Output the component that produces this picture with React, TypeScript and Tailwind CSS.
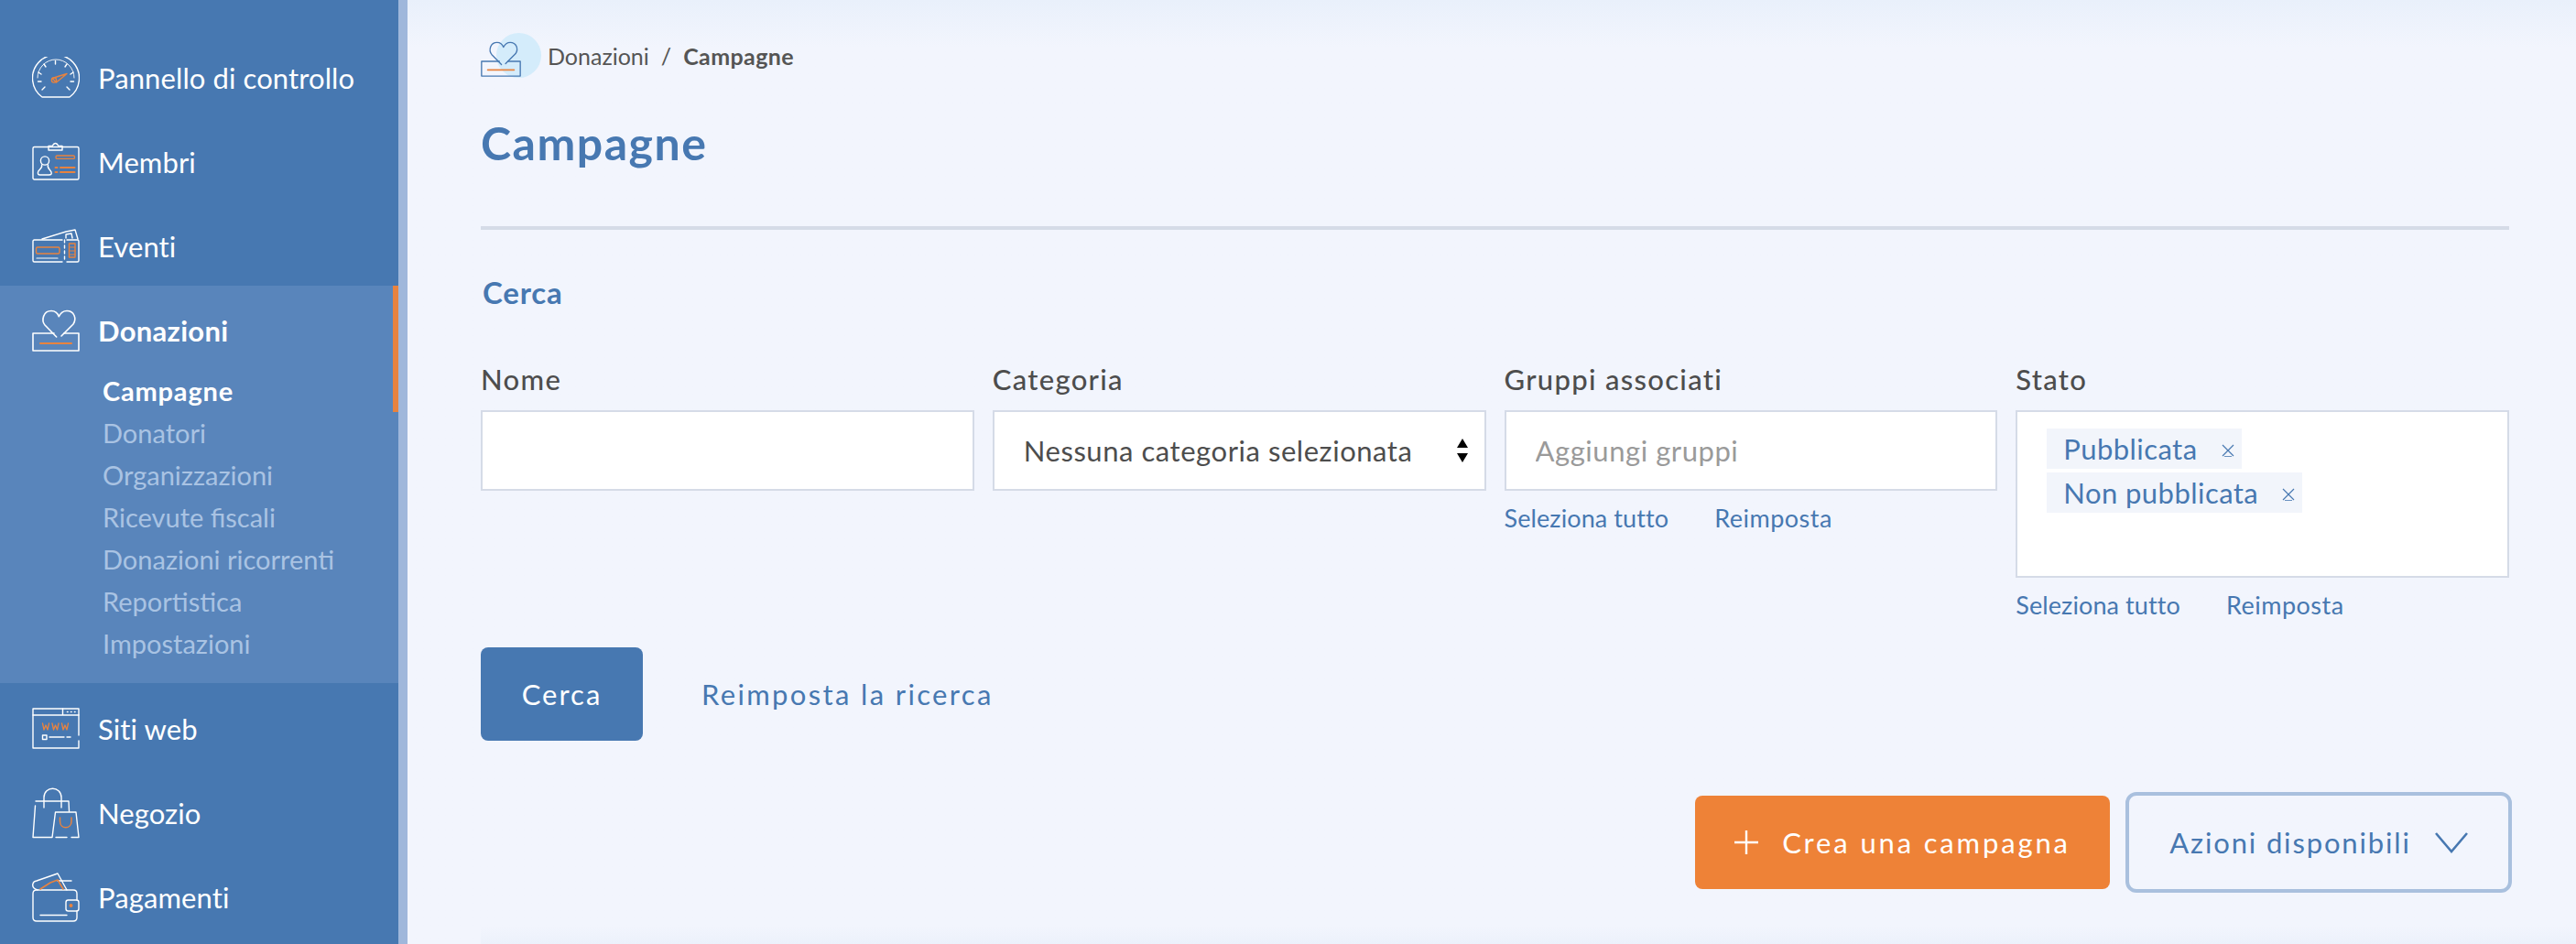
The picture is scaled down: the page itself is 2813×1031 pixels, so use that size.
import React from "react";

const O = "#e8833f";

function Ic({ h = 46, children }: { h?: number; children: React.ReactNode }) {
  return (
    <svg width="52" height={h} viewBox={`0 0 52 ${h}`} fill="none" stroke="#fff" strokeWidth="1.4" strokeLinecap="round" strokeLinejoin="round" className="shrink-0">
      {children}
    </svg>
  );
}

function Gauge() {
  return (
    <Ic>
      <path d="M11 44 A25.5 25.5 0 1 1 41 44 Z" />
      <path d="M11 36 L14 33 M6.5 27 H10 M7 17 L10 19 M13 8 L15 11 M25.5 4.5 V8 M38 8 L36 11 M45 17 L42 19 M45.5 27 H42 M41 36 L38 33" />
      <path d="M6 23 A20 20 0 0 1 46 23" strokeWidth="0.9" />
      <path d="M22 23.5 L38 18.5 L26.5 28 Z" stroke={O} />
      <circle cx="24" cy="25.5" r="2.6" stroke={O} />
    </Ic>
  );
}
function Badge() {
  return (
    <Ic>
      <rect x="1" y="6.5" width="50" height="35.5" rx="1.5" />
      <path d="M18 10 V5.5 H22 Q25.5 -0.5 29 5.5 H33 V10 Z" />
      <circle cx="14" cy="21.5" r="4.6" />
      <path d="M10.5 26 C12 30 7 31 6.5 34 Q6 37 8.5 37 H18.5 Q22 37 21 34 C20 31 16 30 17.5 26" />
      <rect x="26" y="16" width="20.5" height="3.4" rx="1.5" stroke={O} />
      <path d="M25.5 29 H27.5 M25.5 34 H27.5 M31 29 H46.5 M31 34 H46.5" stroke={O} strokeWidth="2" />
    </Ic>
  );
}
function Tickets() {
  return (
    <Ic h={38}>
      <path d="M33 12 H2.5 Q1 12 1 13.5 V34.5 Q1 36 2.5 36 H33 M38 36 H49.5 Q51 36 51 34.5 V13.5 Q51 12 49.5 12 H38" />
      <path d="M35.5 12 V36" strokeDasharray="3 3" />
      <path d="M11 11 L37 3 L47 1 L50 11 M37 10 L37 6 L43 5 L44 10" />
      <rect x="4.5" y="20" width="25.5" height="7" rx="1.5" stroke={O} />
      <rect x="40.5" y="16" width="6.5" height="15" stroke={O} />
      <path d="M40.5 20 H47 M40.5 24 H47 M40.5 28 H47" stroke={O} strokeWidth="1" />
      <path d="M5 32 H28" strokeWidth="1.2" />
    </Ic>
  );
}
function HeartBox({ color = "#fff", w = 52, h = 46 }: { color?: string; w?: number; h?: number }) {
  return (
    <svg width={w} height={h} viewBox="0 0 52 46" fill="none" stroke={color} strokeWidth="1.6" strokeLinecap="round" strokeLinejoin="round" className="shrink-0">
      <path d="M26.7 30 L14 17 C10 12 12 1.5 21 1.5 C25 1.5 28 4 29.3 7.7 C31 4 34 1.5 38 1.5 C46 1.5 49 10 45 16 L32 29" />
      <path d="M24 26 H1 V45 H51 V26 H35" />
      <path d="M9 37 H43" stroke={O} strokeWidth="2" />
    </svg>
  );
}
function Browser() {
  return (
    <Ic>
      <path d="M51 36 V44 H1 V1 H51 V30" />
      <path d="M1 8 H51 M33.5 1 V8" />
      <path d="M38.5 4.5 H39 M42.5 4.5 H43 M46.5 4.5 H47" strokeWidth="1.6" />
      <path d="M11.5 17 L13 24 L15 19 L17 24 L18.5 17 M22 17 L23.5 24 L25.5 19 L27.5 24 L29 17 M32.5 17 L34 24 L36 19 L38 24 L39.5 17" stroke={O} strokeWidth="1.3" />
      <rect x="11.5" y="30" width="4.5" height="4.5" strokeWidth="1.4" />
      <path d="M19 32 H35 M38 32 H42" />
    </Ic>
  );
}
function Bags() {
  return (
    <Ic h={56}>
      <path d="M4 15 H40 L40.5 26 M3.5 20 L1 54.5 H22 M26 54.5 H38 M43 54.5 H51 L48 27 H25.5 L22 54.5" />
      <path d="M13 22 V11 C13 -2 32 -2 32 11 V22" />
      <path d="M30.5 33 V37 C30.5 46 43 46 43 37 V33" stroke={O} strokeWidth="1.5" />
    </Ic>
  );
}
function Wallet() {
  return (
    <Ic h={54}>
      <path d="M49 30 V23 Q49 19 45 19 H5 Q1 19 1 23 V49 Q1 53 5 53 H45 Q49 53 49 49 V42" />
      <path d="M6 19 Q-0.5 17 1 12 Q1.5 9.5 5 9 L28 1 L38 19" />
      <path d="M28 9 H43" />
      <path d="M9 18 L20 11 L28 8 L31 13 L34 18" stroke={O} strokeWidth="1.6" />
      <rect x="37" y="30" width="14" height="12" rx="2.5" />
      <circle cx="42.5" cy="36" r="2" fill={O} stroke="none" />
      <path d="M9 46.5 H38" />
    </Ic>
  );
}

function NavRow({ icon, label, cls = "" }: { icon: React.ReactNode; label: string; cls?: string }) {
  return (
    <div className={`flex items-center h-[92px] pl-[35px] ${cls}`}>
      <span className="w-[72px] flex items-center">{icon}</span>
      <span className="text-white text-[31px] leading-none tracking-[0.1px]">{label}</span>
    </div>
  );
}

const subs = ["Donatori", "Organizzazioni", "Ricevute fiscali", "Donazioni ricorrenti", "Reportistica", "Impostazioni"];

function Sidebar() {
  return (
    <aside className="w-[445px] h-full shrink-0 bg-[#4778b1] border-r-[10px] border-[#9fb7db] pt-[39px] overflow-hidden">
      <NavRow icon={<Gauge />} label="Pannello di controllo" />
      <NavRow icon={<Badge />} label="Membri" />
      <div className="h-[89px]">
        <NavRow icon={<Tickets />} label="Eventi" />
      </div>
      <div className="relative bg-[#5985bb] h-[434px]">
        <span className="absolute right-0 top-0 w-[6px] h-[138px] bg-[#e8833f]" />
        <div className="flex items-center h-[92px] pl-[35px] pt-[6px]">
          <span className="w-[72px] flex items-center"><HeartBox /></span>
          <span className="text-white text-[31px] leading-none font-bold tracking-[0.3px]">Donazioni</span>
        </div>
        <ul className="pl-[112px] mt-0">
          <li className="h-[46px] flex items-center text-white font-bold text-[29px] tracking-[0.8px]">Campagne</li>
          {subs.map((s) => (
            <li key={s} className="h-[46px] flex items-center text-[#a9c3e3] text-[29px]">{s}</li>
          ))}
        </ul>
      </div>
      <div className="pt-[4px]">
        <NavRow icon={<Browser />} label="Siti web" />
        <NavRow icon={<Bags />} label="Negozio" />
        <NavRow icon={<Wallet />} label="Pagamenti" />
      </div>
    </aside>
  );
}

function Label({ children }: { children: React.ReactNode }) {
  return <label className="block h-[65px] pt-[13px] text-[31px] leading-[36px] text-[#4d4d4d] font-medium tracking-[1.3px]">{children}</label>;
}
function Links() {
  return (
    <div className="flex gap-[50px] mt-[14px] text-[27px] leading-[32px] text-[#4778b1]">
      <a className="tracking-[0.1px]">Seleziona tutto</a>
      <a className="tracking-[0.5px]">Reimposta</a>
    </div>
  );
}
function Tag({ children }: { children: React.ReactNode }) {
  return (
    <span className="flex items-center h-[44px] pl-[18px] pr-[7px] gap-[25px] bg-[#f2f5fb] text-[#4778b1] text-[31px] tracking-[0.45px] w-fit">
      {children}
      <svg width="16" height="16" viewBox="0 0 16 16" fill="none" stroke="#4778b1" strokeWidth="1.2" className="mt-1"><path d="M2 2 L14 14 M14 2 L2 14" /><path d="M4 14.5 H12" strokeWidth="0.8" /></svg>
    </span>
  );
}

function App() {
  return (
    <div className="flex h-screen w-full overflow-hidden bg-[#f2f5fd] font-['Lato',sans-serif]">
      <Sidebar />
      <main className="relative flex-1 h-full bg-gradient-to-b from-[#e9f0fb] via-[#f2f5fd] via-[5%] to-[#f2f5fd] pl-[80px] pr-[73px]">
        <div className="flex items-center h-[60px] mt-[31px] relative">
          <span className="absolute left-[17px] top-[5px] w-[49px] h-[49px] rounded-full bg-[#d4ecfb]" />
          <span className="relative top-[3px] w-[74px]"><HeartBox color="#4778b1" w={44} h={41} /></span>
          <span className="relative top-[1px] -left-[1px] text-[25px] text-[#555]">Donazioni<span className="mx-[13px]">/</span><b className="font-bold tracking-[0.4px]">Campagne</b></span>
        </div>
        <h1 className="mt-[35px] text-[50px] leading-[60px] font-bold text-[#4778b1] tracking-[1.5px]">Campagne</h1>
        <hr className="mt-[61px] border-0 h-[4px] bg-[#d5dbe7]" />
        <h2 className="mt-[50px] ml-[2px] text-[33px] leading-[36px] font-bold text-[#4778b1] tracking-[0.8px]">Cerca</h2>
        <div className="grid grid-cols-4 gap-x-[20px] mt-[46px] items-start h-[324px]">
          <div>
            <Label>Nome</Label>
            <input className="block w-full h-[88px] bg-white border-2 border-[#d5dbe7]" />
          </div>
          <div>
            <Label>Categoria</Label>
            <div className="flex items-center justify-between h-[88px] bg-white border-2 border-[#d5dbe7] pl-[32px] pr-[18px] text-[31px] text-[#4d4d4d] tracking-[0.55px]">
              Nessuna categoria selezionata
              <svg width="12" height="26" viewBox="0 0 12 26" fill="#000"><path d="M6 0 L12 10 H0 Z M0 16 H12 L6 26 Z" /></svg>
            </div>
          </div>
          <div>
            <Label>Gruppi associati</Label>
            <input placeholder="Aggiungi gruppi" className="block w-full h-[88px] bg-white border-2 border-[#d5dbe7] pl-[32px] text-[31px] tracking-[0.55px] placeholder:text-[#9a9a9a]" />
            <Links />
          </div>
          <div>
            <Label>Stato</Label>
            <div className="flex flex-col gap-[4px] h-[183px] bg-white border-2 border-[#d5dbe7] pl-[32px] pt-[18px]">
              <Tag>Pubblicata</Tag>
              <Tag>Non pubblicata</Tag>
            </div>
            <Links />
          </div>
        </div>
        <div className="flex items-center gap-[64px]">
          <button className="w-[177px] h-[102px] rounded-[8px] bg-[#4778b1] text-white text-[31px] tracking-[2px]">Cerca</button>
          <a className="text-[31px] text-[#4778b1] tracking-[2.35px]">Reimposta la ricerca</a>
        </div>
        <div className="flex justify-end items-center gap-[17px] mt-[56px] -mr-[3px]">
          <button className="flex items-center justify-center gap-[26px] w-[453px] h-[102px] rounded-[8px] bg-[#ee8237] text-white text-[31px] tracking-[2.85px]">
            <svg width="26" height="26" viewBox="0 0 26 26" stroke="#fff" strokeWidth="2.4"><path d="M13 0 V26 M0 13 H26" /></svg>
            Crea una campagna
          </button>
          <button className="flex items-center justify-center gap-[26px] w-[422px] h-[110px] rounded-[12px] border-4 border-[#a9c0de] text-[#4778b1] text-[31px] tracking-[1.85px]">
            Azioni disponibili
            <svg width="36" height="24" viewBox="0 0 36 24" fill="none" stroke="#4778b1" strokeWidth="2.6"><path d="M1 2 L18 22 L35 2" /></svg>
          </button>
        </div>
        <div className="absolute left-[80px] right-0 bottom-0 h-[20px] bg-gradient-to-b from-transparent to-[#ecf1fb]" />
      </main>
    </div>
  );
}

export default App;
